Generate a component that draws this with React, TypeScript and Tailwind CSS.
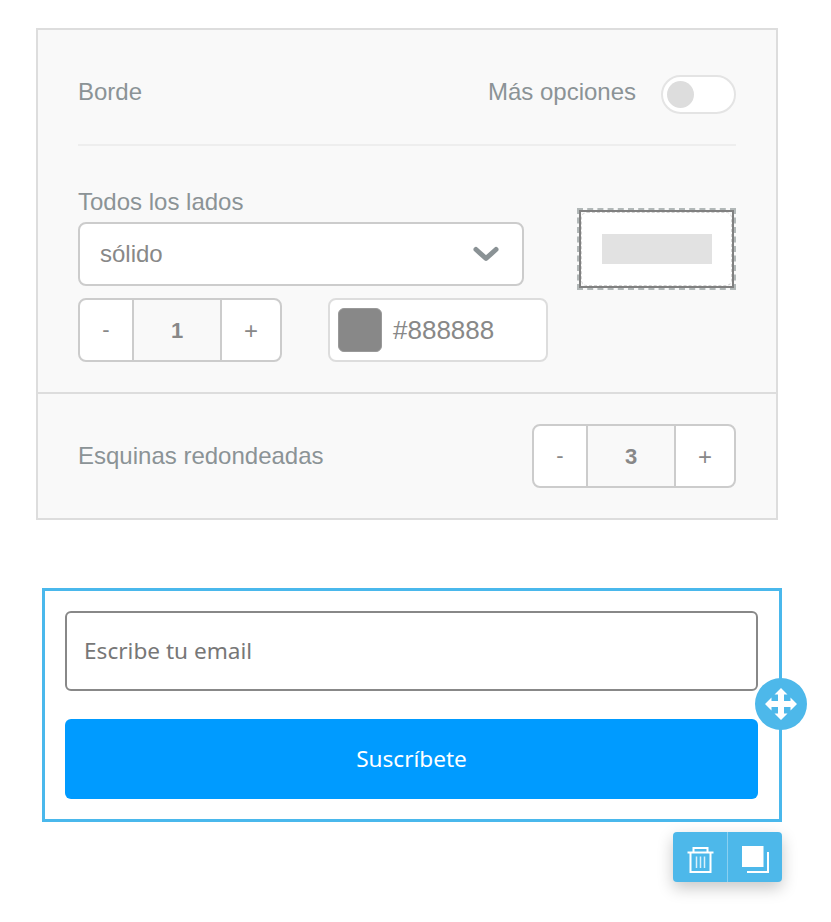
const sans = "font-['Liberation_Sans',Arial,sans-serif]";

function Stepper({ value }: { value: string }) {
  return (
    <div className="flex h-16 w-[204px] overflow-hidden rounded-lg border-2 border-[#cccccc] bg-white text-[#888888]">
      <div className="flex w-[54px] items-center justify-center border-r-2 border-[#cccccc] pb-px text-[22px]">-</div>
      <div className="flex w-[88px] items-center justify-center border-r-2 border-[#cccccc] bg-[#f9f9f9] text-[22px] font-bold">{value}</div>
      <div className="flex flex-1 items-center justify-center pt-px text-[24px]">+</div>
    </div>
  );
}

function MoveIcon() {
  return (
    <svg width="34" height="34" viewBox="0 0 34 34" fill="#ffffff">
      <path d="M17 1 23.500 7.500 20 7.500 20 14 26.500 14 26.500 10.500 33 17 26.500 23.500 26.500 20 20 20 20 26.500 23.500 26.500 17 33 10.500 26.500 14 26.500 14 20 7.500 20 7.500 23.500 1 17 7.500 10.500 7.500 14 14 14 14 7.500 10.500 7.500Z" />
    </svg>
  );
}

function TrashIcon() {
  return (
    <svg width="27" height="27" viewBox="0 0 27 27" fill="none" stroke="#ffffff" strokeWidth="2">
      <path d="M0.500 6.500H26.500" />
      <path d="M6.500 6.500V2H20.500V6.500" />
      <path d="M3.500 6.500V26H23.500V6.500" />
      <path d="M9.500 10.500V22M13.500 10.500V22M17.500 10.500V22" strokeWidth="1.500" strokeOpacity="0.800" />
    </svg>
  );
}

function CopyIcon() {
  return (
    <svg width="27" height="27" viewBox="0 0 27 27">
      <rect x="0" y="0" width="21.500" height="21" fill="#ffffff" />
      <path d="M26 6V26H5" fill="none" stroke="#ffffff" strokeWidth="2" />
    </svg>
  );
}

export default function App() {
  return (
    <div className={`${sans} min-h-[922px] w-[831px] bg-white pl-9 pt-7 antialiased`}>
      <section className="w-[742px] border-2 border-[#dddddd] bg-[#f9f9f9] text-[#8b9396]">
        <div className="px-10">
          <div className="flex h-[116px] items-center justify-between border-b-2 border-[#eeeeee] pt-[10px] text-[24px]">
            <span>Borde</span>
            <div className="flex items-center gap-[25px]">
              <span>Más opciones</span>
              <div className="mt-1 flex h-[39px] w-[75px] items-center rounded-full border-2 border-[#e4e4e4] bg-white pl-1">
                <div className="h-[27px] w-[27px] rounded-full bg-[#dddddd]" />
              </div>
            </div>
          </div>
          <div className="flex h-[246px]">
            <div className="w-[470px] pt-10">
              <div className="h-9 text-[24px] leading-[32px]">Todos los lados</div>
              <div className="flex h-16 w-[446px] items-center justify-between rounded-lg border-2 border-[#cccccc] bg-white pl-5 pr-[23px] text-[24px] text-[#888888]">
                <span>sólido</span>
                <svg width="26" height="16" viewBox="0 0 26 16" fill="none" stroke="#8a9295" strokeWidth="5" strokeLinecap="round" strokeLinejoin="round">
                  <path d="M3 3.500 13 12.500 23 3.500" />
                </svg>
              </div>
              <div className="mt-3 flex w-[470px] gap-[46px]">
                <Stepper value="1" />
                <div className="flex h-16 w-[220px] items-center gap-[11px] rounded-lg border-2 border-[#dddddd] bg-white pl-2 text-[26px] text-[#888888]">
                  <div className="h-11 w-11 rounded-md border border-[#999999] bg-[#888888]" />
                  <span>#888888</span>
                </div>
              </div>
            </div>
            <div className="ml-[29px] mt-[62px] h-[82px] w-40 border-2 border-dashed border-[#b2b8b8]">
              <div className="h-[78px] border-2 border-[#808080]">
                <div className="flex h-[74px] items-center justify-center rounded-md border border-dashed border-[#d4d4d4] bg-white">
                  <div className="h-[30px] w-[110px] bg-[#e2e2e2]" />
                </div>
              </div>
            </div>
          </div>
        </div>
        <div className="flex h-[126px] items-center justify-between border-t-2 border-[#dddddd] px-10 text-[24px]">
          <span>Esquinas redondeadas</span>
          <Stepper value="3" />
        </div>
      </section>

      <section className="relative ml-1.5 mt-[68px] flex h-[234px] w-[740px] flex-col gap-7 border-[3px] border-[#4ab8ec] bg-white pl-5 pr-[21px] pt-5 font-['Noto_Sans',sans-serif] text-[22.6px]">
        <div className="flex h-20 items-center rounded-md border-2 border-[#888888] pl-[17px] text-[#777777]">Escribe tu email</div>
        <div className="flex h-20 items-center justify-center rounded-md bg-[#009bff] text-white">Suscríbete</div>
        <div className="absolute -right-[28px] top-[87px] flex h-[52px] w-[52px] items-center justify-center rounded-full bg-[#4db8ea]">
          <MoveIcon />
        </div>
      </section>

      <div className="ml-[637px] mt-2.5 flex h-[50px] w-[109px] rounded bg-[#4db8ea] shadow-[0_6px_16px_rgba(0,0,0,0.22)]">
        <div className="flex w-[55px] items-center justify-center border-r border-[#8ad0f1] pt-1"><TrashIcon /></div>
        <div className="flex flex-1 items-center justify-center pt-1"><CopyIcon /></div>
      </div>
    </div>
  );
}
